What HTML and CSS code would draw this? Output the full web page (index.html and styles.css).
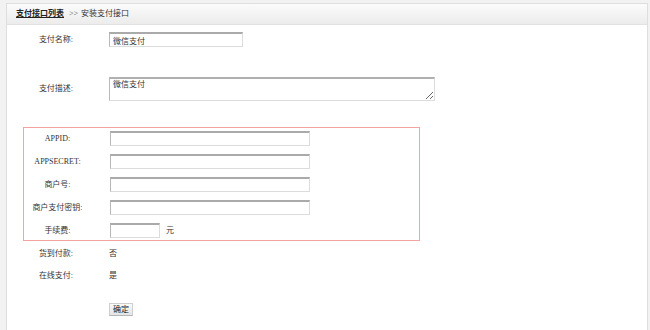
FILE: index.html
```html
<!DOCTYPE html>
<html>
<head>
<meta charset="utf-8">
<link rel="stylesheet" href="styles.css">
</head>
<body>
<div class="main">
  <div class="crumb"><a class="crumb-link" href="#">支付接口列表</a><span class="sep">&gt;&gt;</span><span>安装支付接口</span></div>
  <div class="form">
    <div class="row r-name"><span class="lbl">支付名称:</span><input class="inp w134" type="text" value="微信支付"></div>
    <div class="row r-desc"><span class="lbl">支付描述:</span><textarea class="ta">微信支付</textarea></div>
    <div class="box">
      <div class="row"><span class="lbl">APPID:</span><input class="inp w200" type="text"></div>
      <div class="row"><span class="lbl">APPSECRET:</span><input class="inp w200" type="text"></div>
      <div class="row"><span class="lbl">商户号:</span><input class="inp w200" type="text"></div>
      <div class="row"><span class="lbl">商户支付密钥:</span><input class="inp w200" type="text"></div>
      <div class="row"><span class="lbl">手续费:</span><span class="fee"><input class="inp w50" type="text"><span>元</span></span></div>
    </div>
    <div class="row r-cod"><span class="lbl">货到付款:</span><span class="val">否</span></div>
    <div class="row r-online"><span class="lbl">在线支付:</span><span class="val">是</span></div>
    <div class="row r-btn"><span></span><span><button class="btn" type="button">确定</button></span></div>
  </div>
</div>
</body>
</html>
```
FILE: styles.css
```css
html, body {
  margin: 0;
  padding: 0;
  background: #f2f2f2;
  font-family: "Liberation Serif", "Noto Sans CJK SC", serif;
  font-size: 8px;
  color: #333;
}
.main {
  margin: 3px 0 0 6px;
  width: 642px;
  height: 327px;
  box-sizing: border-box;
  border: 1px solid #dedede;
  border-bottom: none;
  background: #fff;
  overflow: hidden;
}
.crumb {
  height: 20px;
  border-bottom: 1px solid #e2e2e2;
  background: linear-gradient(#fbfbfb, #ececec);
  padding-left: 9px;
  display: flex;
  align-items: center;
  line-height: 1;
}
.crumb-link {
  color: #222;
  font-weight: bold;
  text-decoration: underline;
}
.sep {
  margin: 0 3px 0 5px;
  color: #555;
}
.form {
  padding-left: 16px;
}
.row {
  display: grid;
  grid-template-columns: 66px auto;
  column-gap: 20px;
  align-items: center;
  justify-items: start;
  min-height: 15px;
}
.lbl {
  justify-self: center;
  line-height: 1;
  white-space: nowrap;
}
.val {
  line-height: 1;
}
.r-name { margin-top: 7px; }
.r-desc { margin-top: 30px; }
.inp {
  box-sizing: border-box;
  height: 15px;
  margin: 0;
  padding: 0 3px;
  border: 1px solid #dcdcdc;
  border-top: 2px solid #aaaaaa;
  border-left-color: #b8b8b8;
  font: inherit;
  color: #333;
  background: #fff;
  outline: none;
}
.w134 { width: 134px; }
.w200 { width: 200px; }
.w50 { width: 50px; }
.ta {
  box-sizing: border-box;
  width: 326px;
  height: 24px;
  margin: 0;
  padding: 1px 3px;
  border: 1px solid #dcdcdc;
  border-top: 2px solid #b0b0b0;
  border-left-color: #b8b8b8;
  font: inherit;
  color: #333;
  line-height: 10px;
  resize: both;
  display: block;
}
.box {
  margin-top: 26px;
  width: 397px;
  box-sizing: border-box;
  border: 1px solid #f4a3a3;
  padding: 3px 0 2px;
  display: flex;
  flex-direction: column;
  gap: 8px;
}
.box .row {
  grid-template-columns: 67px auto;
  column-gap: 19px;
}
.fee {
  display: flex;
  align-items: center;
  gap: 6px;
  line-height: 1;
}
.r-cod { margin-top: 5px; }
.r-online { margin-top: 7px; }
.r-btn { margin-top: 19px; }
.btn {
  box-sizing: border-box;
  height: 13px;
  width: 24px;
  padding: 0;
  margin: 0;
  border: 1px solid #cfcfcf;
  border-bottom-color: #b5b5b5;
  background: linear-gradient(#fafafa, #e4e4e4);
  font: inherit;
  color: #222;
  line-height: 1;
}
```
